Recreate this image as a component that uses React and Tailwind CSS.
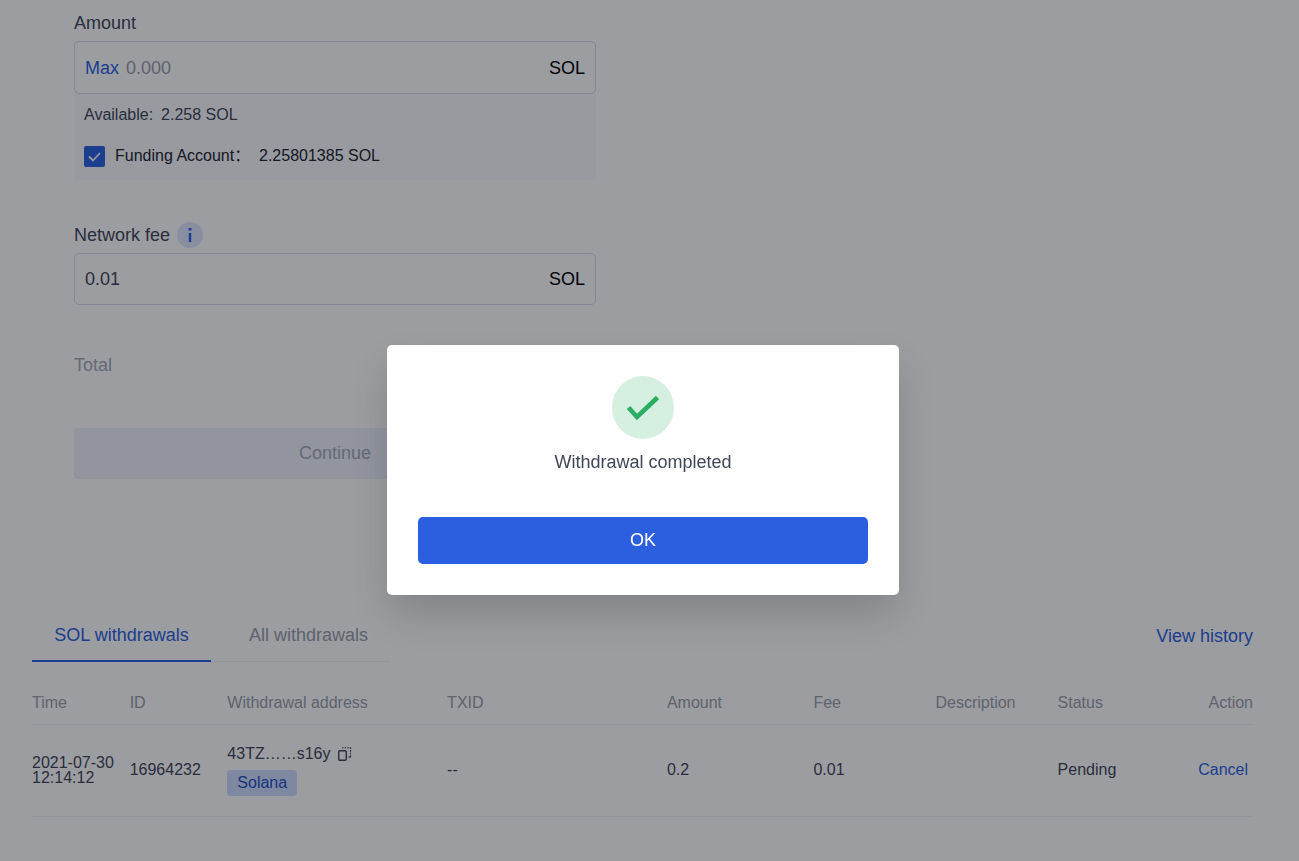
const columns = [
  ["Time", "w-[8%]"],
  ["ID", "w-[8%]"],
  ["Withdrawal address", "w-[18%]"],
  ["TXID", "w-[18%]"],
  ["Amount", "w-[12%]"],
  ["Fee", "w-[10%]"],
  ["Description", "w-[10%]"],
  ["Status", "w-[8%]"],
];

function CopyIcon() {
  return (
    <svg width="14" height="15" viewBox="0 0 14 15" fill="none" stroke="currentColor" aria-hidden="true">
      <rect x="0.75" y="3.75" width="7.500" height="9.500" rx="1" strokeWidth="1.4" />
      <path d="M4 .75h9" strokeWidth="1.2" strokeDasharray="1.600 1" />
      <path d="M12.500 .5v10" strokeWidth="1.2" strokeDasharray="1.600 1" />
      <path d="M10.500 10h2.500" strokeWidth="1.2" />
    </svg>
  );
}

function WithdrawForm() {
  return (
    <form className="mx-[42px] w-[522px] max-w-full text-lg leading-6" onSubmit={(e) => e.preventDefault()}>
      <label htmlFor="amount" className="block">Amount</label>
      <div className="mt-[6px] flex h-[53px] items-center gap-[7px] rounded-[5px] border border-[#d8dbe8] px-[10px]">
        <button type="button" className="text-[#2c5fe0]">Max</button>
        <input id="amount" placeholder="0.000" className="min-w-0 flex-1 bg-transparent outline-none placeholder:text-[#989ea8]" />
        <span className="text-black">SOL</span>
      </div>
      <div className="flex h-[86px] flex-col justify-between bg-[#f9fafd] px-[10px] pt-[9px] pb-3 text-base">
        <div className="flex gap-2">
          <span>Available:</span>
          <span>2.258 SOL</span>
        </div>
        <label className="flex items-center text-[#20242d]">
          <span className="grid size-[21px] place-items-center">
            <input type="checkbox" defaultChecked className="col-start-1 row-start-1 size-[21px] appearance-none rounded-xs bg-[#2c5fe0]" />
            <svg className="pointer-events-none col-start-1 row-start-1" width="13" height="11" viewBox="0 0 13 11" fill="none" stroke="#f4f6fa" strokeWidth="1.8" aria-hidden="true">
              <path d="M1 5.500l4 4L12 2" />
            </svg>
          </span>
          <span className="ml-[10px] w-[144px]">Funding Account：</span>
          <span>2.25801385 SOL</span>
        </label>
      </div>

      <div className="mt-[41px] flex h-[27px] items-center gap-[7px]">
        <label htmlFor="fee">Network fee</label>
        <button type="button" aria-label="Network fee details" className="flex size-[26px] items-center justify-center rounded-full bg-[#dfe8ff] text-[#2c5fe0]">
          <svg width="4" height="14" viewBox="0 0 4 14" fill="currentColor" aria-hidden="true">
            <path d="M.5 0h3v2.500h-3zM.75 5h2.500v9h-2.500z" />
          </svg>
        </button>
      </div>
      <div className="mt-[5px] flex h-[52px] items-center rounded-[5px] border border-[#d8dbe8] px-[10px]">
        <input id="fee" defaultValue="0.01" className="min-w-0 flex-1 bg-transparent outline-none" />
        <span className="text-black">SOL</span>
      </div>

      <div className="mt-12 text-[#a4a9b8]">Total</div>
      <button type="submit" disabled className="mt-[51px] h-[51px] w-full rounded bg-[#eef2fb] pb-[2px] text-[#a4a9b8]">
        Continue
      </button>
    </form>
  );
}

function Withdrawals() {
  return (
    <section className="mt-[130px]">
      <div className="flex items-start justify-between text-lg leading-6">
        <div className="flex">
          <button className="h-[53px] w-[179px] border-b-2 border-[#2c5fe0] text-[#2c5fe0]">SOL withdrawals</button>
          <button className="h-[53px] w-[179px] border-b border-[#f0f1f4] pl-4 text-[#989ea8]">All withdrawals</button>
        </div>
        <a href="#history" className="mt-[15px] text-[#2c5fe0]">View history</a>
      </div>
      <table className="mt-[18px] w-full table-fixed text-left leading-5">
        <thead>
          <tr className="h-11 border-b border-[#eceef2] text-[#989ea8]">
            {columns.map(([name, width]) => (
              <th key={name} className={`${width} pt-[2px] font-normal whitespace-nowrap`}>{name}</th>
            ))}
            <th className="pt-[2px] text-right font-normal">Action</th>
          </tr>
        </thead>
        <tbody>
          <tr className="h-[92px] border-b border-[#eceef2]">
            <td className="leading-[15px] whitespace-nowrap">2021-07-30<br />12:14:12</td>
            <td>16964232</td>
            <td>
              <div className="flex items-center gap-2">
                43TZ……s16y
                <button aria-label="Copy address"><CopyIcon /></button>
              </div>
              <span className="mt-[6px] inline-block rounded bg-[#cfdcff] px-[10px] py-[3px] text-[#2450c4]">Solana</span>
            </td>
            <td>--</td>
            <td>0.2</td>
            <td>0.01</td>
            <td></td>
            <td>Pending</td>
            <td className="text-right"><button className="mr-[5px] text-[#2c5fe0]">Cancel</button></td>
          </tr>
        </tbody>
      </table>
    </section>
  );
}

export default function App() {
  return (
    <div className="min-h-screen bg-white font-['Liberation_Sans',Arial,'Noto_Sans_CJK_SC',sans-serif] text-base text-[#3f4758]">
      <main className="pt-[11px] pr-[46px] pb-11 pl-8">
        <WithdrawForm />
        <Withdrawals />
      </main>
      <div className="fixed inset-0 flex items-start justify-center bg-[#080b14]/40 pt-[345px] pr-[13px]">
        <div role="dialog" aria-modal="true" aria-labelledby="result" className="flex w-[512px] flex-col items-center rounded-[5px] bg-white px-[31px] py-[31px] text-lg leading-6 shadow-[0_20px_40px_-4px_rgba(0,0,0,0.18)]">
          <svg width="62" height="63" viewBox="0 0 62 63" aria-hidden="true">
            <ellipse cx="31" cy="31.500" rx="31" ry="31.500" fill="#d5efe0" />
            <path d="M16.500 31.500l8.500 9.500L45.500 21.500" fill="none" stroke="#2bae62" strokeWidth="4.600" />
          </svg>
          <p id="result" className="mt-[11px]">Withdrawal completed</p>
          <button className="mt-[43px] h-[47px] w-full rounded-[5px] bg-[#2c5fe0] pb-[2px] text-white">OK</button>
        </div>
      </div>
    </div>
  );
}
